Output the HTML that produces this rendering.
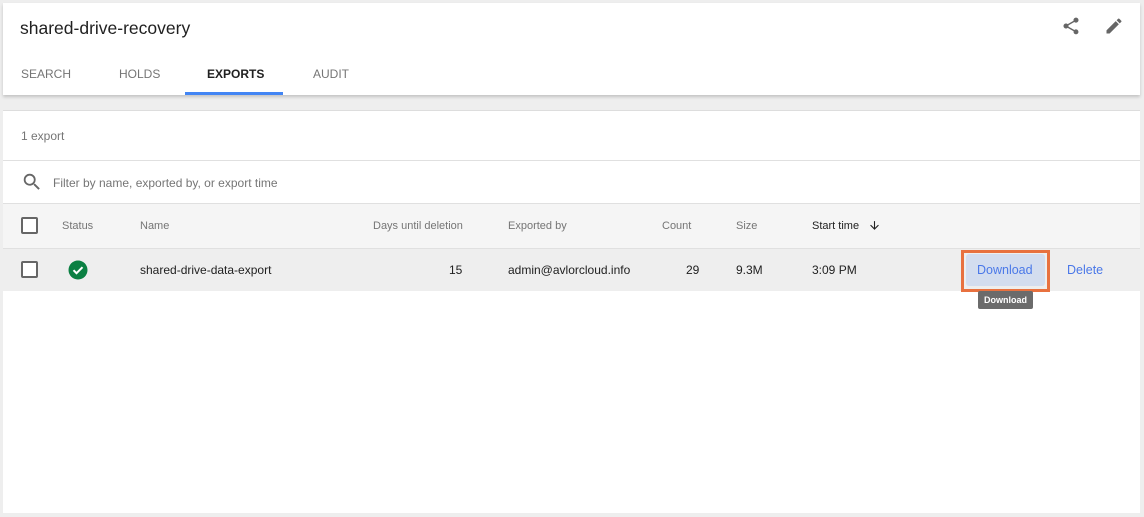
<!DOCTYPE html>
<html><head><style>
*{box-sizing:border-box;margin:0;padding:0}
body{width:1144px;height:517px;background:#eeeeee;font-family:"Liberation Sans",Arial,sans-serif;position:relative;overflow:hidden;color:#212121}
.a{position:absolute}
.card1{left:3px;top:3px;width:1137px;height:92px;background:#fff;box-shadow:0 2px 3px rgba(0,0,0,.18)}
.card2{left:3px;top:110px;width:1137px;height:403px;background:#fff;border-top:1px solid #ddd}
.tab{font-size:12px;color:#757575;top:67px}
.hd{font-size:11px;color:#757575;top:220px}
.cell{font-size:12px;color:#212121;top:263px}
.cb{width:17px;height:17px;border:2px solid #666;border-radius:2px;background:#fff}
</style></head><body>
<div class="a card1"></div>
<div class="a" style="left:20px;top:18px;font-size:17.5px;color:#212121">shared-drive-recovery</div>
<div class="a tab" style="left:21px">SEARCH</div>
<div class="a tab" style="left:119px">HOLDS</div>
<div class="a tab" style="left:207px;color:#212121;font-weight:bold">EXPORTS</div>
<div class="a tab" style="left:313px">AUDIT</div>
<div class="a" style="left:185px;top:92px;width:98px;height:3px;background:#4285f4"></div>
<svg class="a" style="left:1061px;top:16px" width="20" height="20" viewBox="0 0 24 24"><path fill="#666" d="M18 16.08c-.76 0-1.440.3-1.96.77L8.91 12.7c.05-.23.09-.46.09-.7s-.04-.47-.09-.7l7.050-4.11c.54.5 1.25.81 2.04.81 1.66 0 3-1.340 3-3s-1.340-3-3-3-3 1.34-3 3c0 .24.04.47.09.7L8.04 9.81C7.5 9.31 6.79 9 6 9c-1.66 0-3 1.34-3 3s1.34 3 3 3c.79 0 1.5-.31 2.04-.81l7.12 4.16c-.05.21-.08.43-.08.65 0 1.61 1.31 2.92 2.92 2.92s2.92-1.31 2.92-2.92-1.31-2.92-2.92-2.92z"/></svg>
<svg class="a" style="left:1104px;top:16px" width="20" height="20" viewBox="0 0 24 24"><path fill="#666" d="M3 17.25V21h3.75L17.81 9.94l-3.75-3.75L3 17.25zM20.71 7.04c.39-.39.39-1.02 0-1.41l-2.34-2.34a.996.996 0 0 0-1.41 0l-1.83 1.83 3.75 3.75 1.83-1.830z"/></svg>

<div class="a card2"></div>
<div class="a" style="left:21px;top:129px;font-size:12px;color:#757575">1 export</div>
<div class="a" style="left:3px;top:160px;width:1137px;height:1px;background:#e0e0e0"></div>
<svg class="a" style="left:21px;top:171px" width="22" height="22" viewBox="0 0 24 24"><path fill="#666" d="M15.5 14h-.79l-.28-.27A6.47 6.47 0 0 0 16 9.5 6.5 6.5 0 1 0 9.5 16c1.61 0 3.09-.59 4.23-1.57l.27.28v.79l5 4.99L20.49 19l-4.99-5zm-6 0C7.01 14 5 11.99 5 9.5S7.01 5 9.5 5 14 7.01 14 9.5 11.99 14 9.5 14z"/></svg>
<div class="a" style="left:53px;top:176px;font-size:12px;color:#757575">Filter by name, exported by, or export time</div>
<div class="a" style="left:3px;top:203px;width:1137px;height:46px;background:#f5f5f5;border-top:1px solid #e0e0e0;border-bottom:1px solid #e0e0e0"></div>
<div class="a cb" style="left:21px;top:217px"></div>
<div class="a hd" style="left:62px">Status</div>
<div class="a hd" style="left:140px">Name</div>
<div class="a hd" style="left:373px">Days until deletion</div>
<div class="a hd" style="left:508px">Exported by</div>
<div class="a hd" style="left:662px">Count</div>
<div class="a hd" style="left:736px">Size</div>
<div class="a hd" style="left:812px;color:#212121">Start time</div>
<svg class="a" style="left:868px;top:219px" width="13" height="13" viewBox="0 0 24 24"><path fill="#212121" d="M20 12l-1.41-1.41L13 16.17V4h-2v12.17l-5.58-5.59L4 12l8 8 8-8z"/></svg>
<div class="a" style="left:3px;top:249px;width:1137px;height:42px;background:#eeeeee"></div>
<div class="a cb" style="left:21px;top:261px"></div>
<svg class="a" style="left:68px;top:260px" width="20" height="20" viewBox="0 0 20 20"><circle cx="10" cy="10" r="9.5" fill="#0b8043"/><path d="M5.5 10.2l3 3 6-6" stroke="#fff" stroke-width="2" fill="none"/></svg>
<div class="a cell" style="left:140px">shared-drive-data-export</div>
<div class="a cell" style="left:449px">15</div>
<div class="a cell" style="left:508px">admin@avlorcloud.info</div>
<div class="a cell" style="left:686px">29</div>
<div class="a cell" style="left:736px">9.3M</div>
<div class="a cell" style="left:812px">3:09 PM</div>
<div class="a" style="left:961px;top:250px;width:89px;height:42px;border:3px solid #e8713f"></div>
<div class="a" style="left:966px;top:254px;width:79px;height:32px;background:#d3ddef;border-radius:3px"></div>
<div class="a" style="left:977px;top:263px;font-size:12.5px;color:#4a78e8">Download</div>
<div class="a" style="left:1067px;top:263px;font-size:12.5px;color:#4a78e8">Delete</div>
<div class="a" style="left:978px;top:291px;width:55px;height:18px;background:#6b6b6b;border-radius:2px;color:#fff;font-size:9px;font-weight:bold;text-align:center;line-height:18px">Download</div>
</body></html>
